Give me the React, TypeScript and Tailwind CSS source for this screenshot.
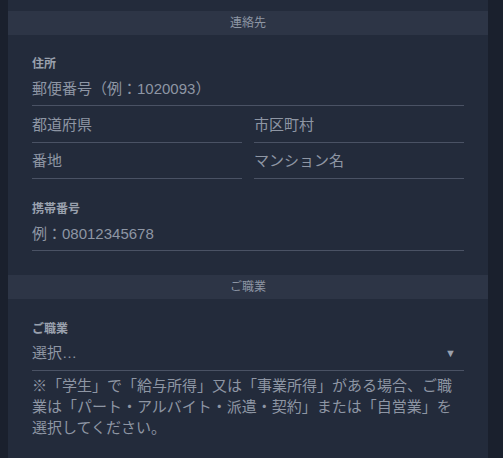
import React from "react";

const font = { fontFamily: '"Liberation Sans", "Noto Sans CJK JP", sans-serif' };

function Field({ placeholder, h = "h-[34px]" }: { placeholder: string; h?: string }) {
  return (
    <input
      readOnly
      placeholder={placeholder}
      className={`w-full ${h} bg-transparent border-b border-[#4a5264] text-[15px] text-[#8e96a4] placeholder:text-[#8e96a4] outline-none px-0`}
    />
  );
}

function Label({ children }: { children: React.ReactNode }) {
  return <div className="h-4 text-[12px] leading-4 font-bold text-[#9aa1ae]">{children}</div>;
}

function Header({ children }: { children: React.ReactNode }) {
  return (
    <div className="h-6 bg-[#2d3546] flex items-center justify-center text-[12px] text-[#8e96a4]">
      {children}
    </div>
  );
}

export default function App() {
  return (
    <div className="w-[503px] h-[458px] overflow-hidden bg-[#1a202d]" style={font}>
      <div className="mx-2 w-[480px] h-full bg-[#232b3b] pt-[11px]">
        <Header>連絡先</Header>
        <div className="px-6 pt-[21px]">
          <Label>住所</Label>
          <Field placeholder="郵便番号（例：1020093）" />
          <div className="grid grid-cols-2 gap-x-3">
            <Field placeholder="都道府県" h="h-[37px]" />
            <Field placeholder="市区町村" h="h-[37px]" />
            <Field placeholder="番地" h="h-[36px]" />
            <Field placeholder="マンション名" h="h-[36px]" />
          </div>
          <div className="pt-[22px]">
            <Label>携帯番号</Label>
            <Field placeholder="例：08012345678" />
          </div>
        </div>
        <div className="pt-6">
          <Header>ご職業</Header>
        </div>
        <div className="px-6 pt-[22px]">
          <Label>ご職業</Label>
          <div className="h-[34px] border-b border-[#4a5264] flex items-center justify-between text-[15px] text-[#8e96a4]">
            <span>選択…</span>
            <span className="text-[11px] pr-2 text-[#9aa1ae]">▼</span>
          </div>
          <p className="mt-1 text-[15px] leading-[21px] text-[#8e96a4]">
            ※「学生」で「給与所得」又は「事業所得」がある場合、ご職業は「パート・アルバイト・派遣・契約」または「自営業」を選択してください。
          </p>
        </div>
      </div>
    </div>
  );
}
